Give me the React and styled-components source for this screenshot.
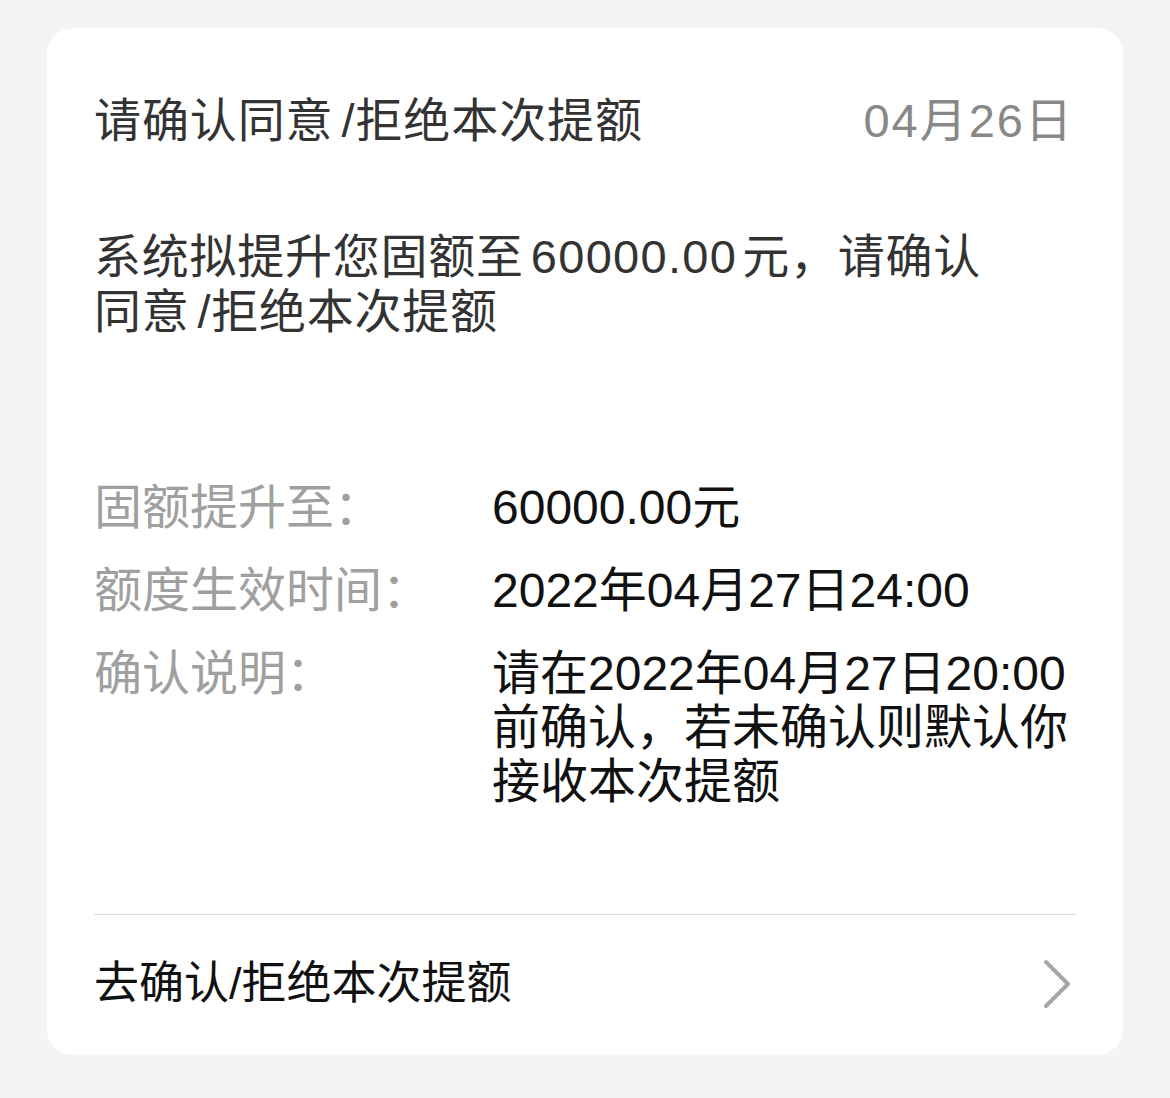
import React from "react";
import styled, { createGlobalStyle } from "styled-components";

const GlobalStyle = createGlobalStyle`
  html, body {
    margin: 0;
    padding: 0;
    background: #f4f4f4;
  }
  body {
    font-family: "Liberation Sans", "Noto Sans CJK SC", sans-serif;
  }
`;

const Page = styled.div`
  width: 1170px;
  height: 1098px;
  padding: 28px 47px 0 47px;
  box-sizing: border-box;
  background: #f4f4f4;
`;

const Card = styled.div`
  background: #ffffff;
  border-radius: 26px;
  height: 1027px;
  box-sizing: border-box;
  padding: 63px 47px 0 47px;
  display: flex;
  flex-direction: column;
`;

const Header = styled.div`
  display: flex;
  justify-content: space-between;
  align-items: center;
  height: 60px;
`;

const Title = styled.div`
  font-size: 47px;
  line-height: 60px;
  color: #333333;
  letter-spacing: 0.9px;
`;

const Slash = styled.span`
  margin-left: 8px;
`;

const DateText = styled.div`
  font-size: 47px;
  line-height: 60px;
  color: #888888;
  letter-spacing: 2px;
  padding-right: 2px;
`;

const Description = styled.p`
  margin: 78px 0 0 0;
  font-size: 47px;
  line-height: 55px;
  color: #333333;
  letter-spacing: 0.75px;
`;

const Amount = styled.span`
  letter-spacing: 1.3px;
  margin-left: 7px;
  margin-right: 5px;
`;

const Details = styled.div`
  margin-top: 142px;
  display: grid;
  grid-template-columns: 398px 1fr;
  row-gap: 29px;
`;

const Label = styled.div`
  font-size: 48px;
  line-height: 54px;
  color: #a0a0a0;
`;

const Value = styled.div`
  font-size: 48px;
  line-height: 54px;
  color: #111111;
`;

const Divider = styled.div`
  margin-top: 105px;
  height: 1px;
  background: #dcdcdc;
`;

const Footer = styled.div`
  flex: 1;
  display: flex;
  align-items: center;
  justify-content: space-between;
  padding-bottom: 3px;
`;

const FooterText = styled.div`
  font-size: 45px;
  line-height: 54px;
  color: #111111;
`;

const Chevron = styled.svg`
  width: 34px;
  height: 52px;
  margin-right: 2px;
`;

export default function App() {
  return (
    <>
      <GlobalStyle />
      <Page>
        <Card>
          <Header>
            <Title>
              请确认同意<Slash>/</Slash>拒绝本次提额
            </Title>
            <DateText>04月26日</DateText>
          </Header>
          <Description>
            系统拟提升您固额至<Amount>60000.00</Amount>元，请确认
            <br />
            同意<Slash>/</Slash>拒绝本次提额
          </Description>
          <Details>
            <Label>固额提升至：</Label>
            <Value>60000.00元</Value>
            <Label>额度生效时间：</Label>
            <Value>2022年04月27日24:00</Value>
            <Label>确认说明：</Label>
            <Value>
              请在2022年04月27日20:00
              <br />
              前确认，若未确认则默认你
              <br />
              接收本次提额
            </Value>
          </Details>
          <Divider />
          <Footer>
            <FooterText>去确认/拒绝本次提额</FooterText>
            <Chevron viewBox="0 0 34 52">
              <path
                d="M6 4 L28 26 L6 48"
                fill="none"
                stroke="#a6a6a6"
                strokeWidth="4"
                strokeLinecap="round"
                strokeLinejoin="round"
              />
            </Chevron>
          </Footer>
        </Card>
      </Page>
    </>
  );
}
